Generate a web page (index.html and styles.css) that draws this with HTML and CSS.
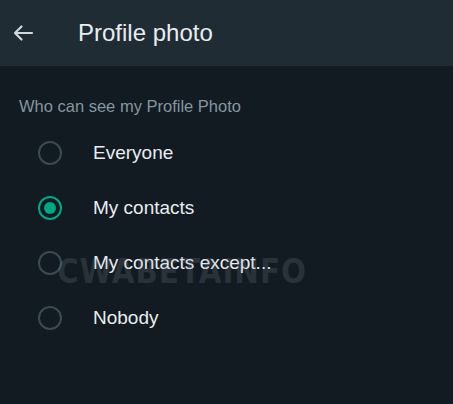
FILE: index.html
```html
<!DOCTYPE html>
<html lang="en">
<head>
    <meta charset="UTF-8">
    <meta name="viewport" content="width=device-width, initial-scale=1.0">
    <title>Profile photo</title>
    <link rel="stylesheet" href="styles.css">
</head>
<body>
    <header class="topbar">
        <svg class="back" width="24" height="24" viewBox="0 0 24 24">
            <path d="M21 12H4M10.5 5.5L4 12l6.5 6.5" fill="none" stroke="#d1d7db" stroke-width="2.2" stroke-linecap="round" stroke-linejoin="round"/>
        </svg>
        <h1 class="title">Profile photo</h1>
    </header>

    <main class="content">
        <div class="caption">Who can see my Profile Photo</div>
        <ul class="options">
            <li class="option"><span class="radio"></span>Everyone</li>
            <li class="option"><span class="radio checked"></span>My contacts</li>
            <li class="option"><span class="radio"></span>My contacts except...</li>
            <li class="option"><span class="radio"></span>Nobody</li>
        </ul>
        <div class="watermark">CWABETAINFO</div>
    </main>
</body>
</html>
```

FILE: styles.css
```css
* {
    box-sizing: border-box;
}
body {
    margin: 0;
    background-color: #111b21;
    font-family: "Liberation Sans", Arial, sans-serif;
    color: #e9edef;
    height: 404px;
}
.topbar {
    display: flex;
    align-items: center;
    height: 66px;
    padding-left: 11px;
    background-color: #1f2c34;
}
.back {
    flex-shrink: 0;
}
.title {
    margin: 0 0 0 43px;
    font-size: 24px;
    font-weight: 400;
    color: #e9edef;
}
.content {
    position: relative;
    padding-top: 30px;
}
.caption {
    padding-left: 19px;
    font-size: 16.5px;
    line-height: 20px;
    color: #8696a0;
}
.options {
    list-style: none;
    margin: 9px 0 0;
    padding: 0;
}
.option {
    display: flex;
    align-items: center;
    height: 55px;
    padding-left: 38px;
    font-size: 19px;
    color: #e9edef;
}
.radio {
    width: 24px;
    height: 24px;
    margin-right: 31px;
    border: 2px solid #3b4a54;
    border-radius: 50%;
    display: flex;
    align-items: center;
    justify-content: center;
}
.radio.checked {
    border-color: #00a884;
}
.radio.checked::after {
    content: "";
    width: 12px;
    height: 12px;
    border-radius: 50%;
    background-color: #00a884;
}
.watermark {
    position: absolute;
    left: 57px;
    top: 187px;
    font-family: "DejaVu Sans", sans-serif;
    font-weight: bold;
    font-size: 31px;
    letter-spacing: 1px;
    transform: scaleX(0.95) scaleY(1.1);
    transform-origin: left center;
    color: rgba(140, 150, 160, 0.2);
    pointer-events: none;
}
```
